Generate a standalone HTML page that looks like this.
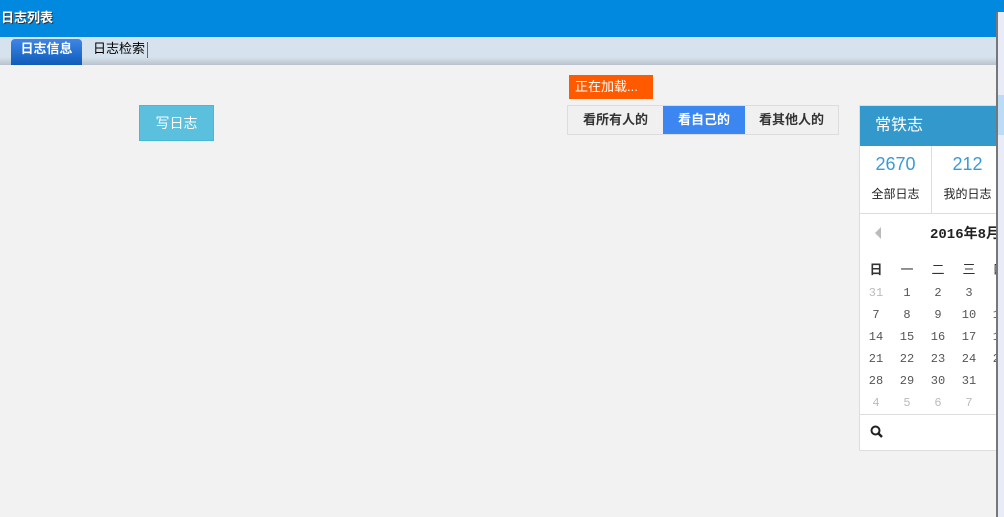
<!DOCTYPE html><html><head><meta charset="utf-8"><style>
*{margin:0;padding:0;box-sizing:border-box}
body{width:1004px;height:517px;background:#f2f2f2;font-family:"Liberation Sans","Noto Sans CJK SC",sans-serif;position:relative;overflow:hidden;font-size:13px}
.a{position:absolute}
</style></head><body>
<div class="a" style="left:0;top:0;width:1004px;height:37px;background:#0189e0"></div>
<div class="a" style="left:1px;top:7px;color:#fff;font-weight:bold;font-size:13px;text-shadow:1px 1px 0 #333">日志列表</div>
<div class="a" style="left:0;top:37px;width:1004px;height:28px;background:linear-gradient(#d6e3ee 0,#d6e3ee 20px,#b9c2cc 28px)"></div>
<div class="a" style="left:11px;top:39px;width:71px;height:26px;background:linear-gradient(#3e86e8,#0f5cb8);border-radius:4px 4px 0 0;color:#fff;font-weight:bold;text-align:center;line-height:19px">日志信息</div>
<div class="a" style="left:93px;top:39px;line-height:19px;color:#000">日志检索</div>
<div class="a" style="left:147px;top:42px;width:1px;height:16px;background:#666"></div>
<div class="a" style="left:139px;top:105px;width:75px;height:36px;background:#5bc0de;border:1px solid #46b8da;color:#fff;text-align:center;line-height:34px;font-size:14px">写日志</div>
<div class="a" style="left:569px;top:75px;width:84px;height:24px;background:#ff5a00;color:#fff;line-height:24px;padding-left:6px">正在加载...</div>
<div class="a" style="left:567px;top:105px;width:272px;height:30px;border:1px solid #ddd;background:#f0f0f0;display:flex;font-weight:bold;color:#333">
<div style="width:95px;text-align:center;line-height:28px">看所有人的</div>
<div style="width:82px;text-align:center;line-height:28px;background:#3b86f0;color:#fff">看自己的</div>
<div style="flex:1;text-align:center;line-height:28px">看其他人的</div></div>
<div class="a" style="left:859px;top:105px;width:150px;height:346px;background:#fff;border:1px solid #ddd"></div>
<div class="a" style="left:860px;top:106px;width:145px;height:40px;background:#3399cc;color:#fff;font-size:16px;line-height:40px;padding-left:15px">常铁志</div>
<div class="a" style="left:931px;top:146px;width:1px;height:67px;background:#ddd"></div>
<div class="a" style="left:860px;top:213px;width:145px;height:1px;background:#ddd"></div>
<div class="a" style="left:860px;top:154px;width:71px;text-align:center;color:#3a9ad8;font-size:18px">2670</div>
<div class="a" style="left:932px;top:154px;width:71px;text-align:center;color:#3a9ad8;font-size:18px">212</div>
<div class="a" style="left:860px;top:185px;width:71px;text-align:center;font-size:12px;color:#222">全部日志</div>
<div class="a" style="left:932px;top:185px;width:71px;text-align:center;font-size:12px;color:#222">我的日志</div>
<div class="a" style="left:875px;top:227px;width:0;height:0;border-top:6px solid transparent;border-bottom:6px solid transparent;border-right:6px solid #bbb"></div>
<div class="a" style="left:930px;top:223px;font-weight:bold;font-size:14px;color:#222;font-family:'Liberation Mono','Noto Sans CJK SC',monospace">2016年8月</div>
<div id="cal"></div>
<div class="a" style="left:860px;top:414px;width:145px;height:1px;background:#ddd"></div>
<svg class="a" style="left:870px;top:425px" width="14" height="14"><circle cx="5.5" cy="5.5" r="4" fill="none" stroke="#222" stroke-width="2"/><path d="M8.5 8.5L12 12" stroke="#222" stroke-width="2.5"/></svg>
<div class="a" style="left:996px;top:12px;width:8px;height:505px;background:#e9ecf6;border-left:2px solid #777"></div>
<div class="a" style="left:998px;top:95px;width:6px;height:40px;background:#bcdcf5"></div>
<script>
var h='',xs=[876,907,938,969,1000],hd=['日','一','二','三','四'];
for(var i=0;i<5;i++)h+='<div class="a" style="left:'+(xs[i]-10)+'px;top:259px;width:20px;text-align:center;font-weight:'+(i==0?'bold':'normal')+';color:#333">'+hd[i]+'</div>';
var rows=[[31,1,2,3,4],[7,8,9,10,11],[14,15,16,17,18],[21,22,23,24,25],[28,29,30,31,1],[4,5,6,7,8]];
for(var r=0;r<6;r++)for(var c=0;c<5;c++){var g=(r==0&&c==0)||r==5;
h+='<div class="a" style="left:'+(xs[c]-12)+'px;top:'+(286+r*22)+'px;width:24px;text-align:center;font-size:12px;font-family:\'Liberation Mono\',monospace;color:'+(g?'#bbb':'#555')+'">'+rows[r][c]+'</div>';}
document.getElementById('cal').innerHTML=h;
</script>
</body></html>
